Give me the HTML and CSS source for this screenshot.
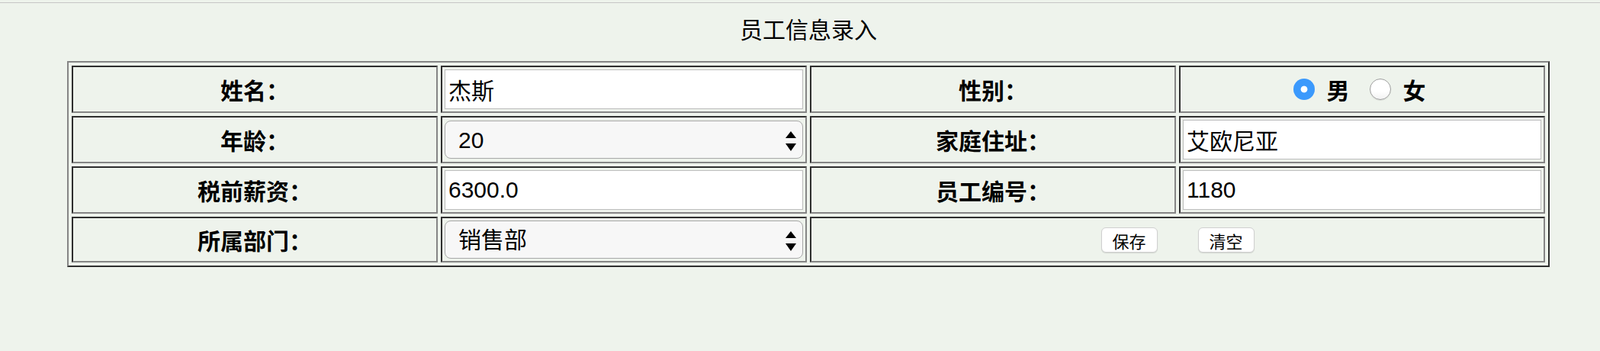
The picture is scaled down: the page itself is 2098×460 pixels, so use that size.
FILE: index.html
```html
<!DOCTYPE html>
<html lang="zh-CN">
<head>
<meta charset="utf-8">
<title>员工信息录入</title>
<link rel="stylesheet" href="styles.css">
</head>
<body>
<div class="topline"></div>
<div class="page">
  <div class="title">员工信息录入</div>
  <form class="form">
    <table class="grid">
      <tr>
        <th class="label">姓名：</th>
        <td class="field"><input class="text" type="text" value="杰斯"></td>
        <th class="label">性别：</th>
        <td class="field center"><span class="radios"><input class="radio" type="radio" name="sex" checked><span class="opt">男</span><input class="radio" type="radio" name="sex"><span class="opt last">女</span></span></td>
      </tr>
      <tr>
        <th class="label">年龄：</th>
        <td class="field"><span class="selwrap"><select class="sel"><option>20</option></select><svg class="arrows" viewBox="0 0 14 26" width="14" height="26"><polygon points="7,0 14,9 0,9"/><polygon points="0,16 14,16 7,26"/></svg></span></td>
        <th class="label">家庭住址：</th>
        <td class="field"><input class="text" type="text" value="艾欧尼亚"></td>
      </tr>
      <tr>
        <th class="label">税前薪资：</th>
        <td class="field"><input class="text" type="text" value="6300.0"></td>
        <th class="label">员工编号：</th>
        <td class="field"><input class="text" type="text" value="1180"></td>
      </tr>
      <tr>
        <th class="label">所属部门：</th>
        <td class="field"><span class="selwrap"><select class="sel"><option>销售部</option></select><svg class="arrows" viewBox="0 0 14 26" width="14" height="26"><polygon points="7,0 14,9 0,9"/><polygon points="0,16 14,16 7,26"/></svg></span></td>
        <td class="field center" colspan="2"><button class="btn first" type="button">保存</button><button class="btn" type="button">清空</button></td>
      </tr>
    </table>
  </form>
</div>
</body>
</html>
```
FILE: styles.css
```css
html, body {
  margin: 0;
  padding: 0;
}
body {
  background: #eef3ec;
  color: #000;
  font-family: "Liberation Sans", "Noto Sans CJK SC", sans-serif;
  height: 460px;
}
.topline {
  height: 3px;
  border-bottom: 1px solid #c6c6c6;
}
.page {
  width: 1944px;
  margin-left: 88px;
}
.title {
  margin-top: 16px;
  font-size: 30px;
  line-height: 40px;
  text-align: center;
}
.form {
  margin: 20px 0 0 0;
}
.grid {
  width: 100%;
  table-layout: fixed;
  border-collapse: separate;
  border-spacing: 4px;
  border: 2px solid;
  border-color: #858585 #2e2e2e #2e2e2e #858585;
}
.grid th,
.grid td {
  border: 2px solid;
  border-color: #2e2e2e #858585 #858585 #2e2e2e;
  padding: 1px;
  vertical-align: middle;
}
.label {
  font-size: 30px;
  font-weight: bold;
  text-align: center;
}
.center {
  text-align: center;
}
.text {
  display: block;
  box-sizing: border-box;
  width: calc(100% - 4px);
  height: 52px;
  margin: 2px;
  padding: 0 4px;
  border: 1px solid #bdbdbd;
  background: #fff;
  color: #000;
  font-family: "Liberation Sans", "Noto Sans CJK SC", sans-serif;
  font-size: 30px;
  outline: none;
}
.selwrap {
  position: relative;
  display: block;
  margin: 2px;
}
.sel {
  display: block;
  box-sizing: border-box;
  width: 100%;
  height: 50px;
  -webkit-appearance: none;
  appearance: none;
  border: 1px solid #a8a8a8;
  border-radius: 8px;
  background: #f7f7f7;
  color: #000;
  font-family: "Liberation Sans", "Noto Sans CJK SC", sans-serif;
  font-size: 30px;
  padding: 0 40px 0 17px;
  outline: none;
}
.arrows {
  position: absolute;
  right: 9px;
  top: calc(50% - 11.5px);
  fill: #000;
  pointer-events: none;
}
.radios {
  display: inline-block;
  padding-right: 7px;
}
.radio {
  -webkit-appearance: none;
  appearance: none;
  box-sizing: border-box;
  width: 28px;
  height: 28px;
  margin: 0;
  border-radius: 50%;
  border: 1px solid #9e9e9e;
  background: linear-gradient(#ffffff 60%, #f2f2f2);
  box-shadow: 0 1px 1px rgba(0, 0, 0, 0.08);
  vertical-align: middle;
}
.radio:checked {
  border: none;
  box-shadow: none;
  background: radial-gradient(circle, #ffffff 0 4px, #3b99fc 4.8px);
}
.opt {
  font-size: 30px;
  font-weight: bold;
  vertical-align: middle;
  margin: 0 26px 0 16px;
}
.opt.last {
  margin-right: 0;
}
.btn {
  box-sizing: border-box;
  width: 74px;
  height: 33px;
  padding: 0;
  margin: 0;
  vertical-align: middle;
  background: #fff;
  color: #000;
  border: 1px solid #d0d0d0;
  border-radius: 6px;
  box-shadow: 0 1px 1px rgba(0, 0, 0, 0.12);
  font-family: "Liberation Sans", "Noto Sans CJK SC", sans-serif;
  font-size: 22px;
}
.btn.first {
  margin-right: 53px;
}
```
